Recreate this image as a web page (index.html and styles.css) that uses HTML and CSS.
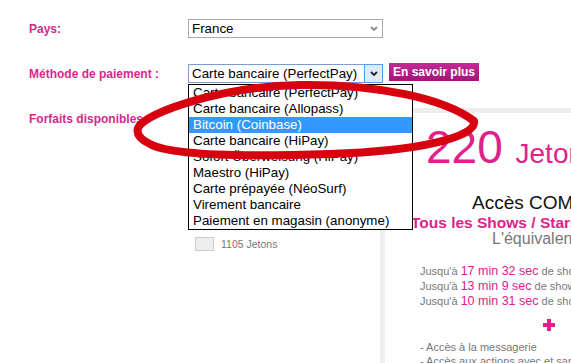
FILE: index.html
```html
<!DOCTYPE html>
<html lang="fr">
<head>
  <meta charset="UTF-8" />
  <title>Paiement</title>
  <link rel="stylesheet" href="styles.css">
</head>
<body>
  <div class="form">
    <div class="row">
      <label class="label">Pays:</label>
      <div class="select">
        <span class="select-text">France</span>
        <span class="arrow"><svg width="8" height="6" viewBox="0 0 8 6"><path d="M1 1 L4 4 L7 1" fill="none" stroke="#8a8a8a" stroke-width="1.8"/></svg></span>
      </div>
    </div>

    <div class="row row-method">
      <label class="label">Méthode de paiement :</label>
      <div class="select select-open">
        <span class="select-text">Carte bancaire (PerfectPay)</span>
        <span class="arrow"><svg width="8" height="6" viewBox="0 0 8 6"><path d="M1 1 L4 4 L7 1" fill="none" stroke="#222" stroke-width="1.8"/></svg></span>
        <ul class="dropdown">
          <li>Carte bancaire (PerfectPay)</li>
          <li>Carte bancaire (Allopass)</li>
          <li class="active">Bitcoin (Coinbase)</li>
          <li>Carte bancaire (HiPay)</li>
          <li>Sofort Überweisung (HiPay)</li>
          <li>Maestro (HiPay)</li>
          <li>Carte prépayée (NéoSurf)</li>
          <li>Virement bancaire</li>
          <li>Paiement en magasin (anonyme)</li>
        </ul>
      </div>
      <a class="btn-info" href="#">En savoir plus</a>
    </div>

    <div class="row row-packs">
      <label class="label">Forfaits disponibles :</label>
      <div class="packs">
        <div class="pack"><span class="pack-box"></span>1105 Jetons</div>
      </div>
      <div class="offer">
        <div class="offer-amount">220 <small>Jetons</small></div>
        <div class="offer-title">Accès COMPLET pendant 30 jours</div>
        <div class="offer-sub">Tous les Shows / Stars / Vidéos</div>
        <div class="offer-equiv">L'équivalent de</div>
        <div class="offer-times">
          <div>Jusqu'à <b>17 min 32 sec</b> de show privé</div>
          <div>Jusqu'à <b>13 min 9 sec</b> de show privé</div>
          <div>Jusqu'à <b>10 min 31 sec</b> de show privé</div>
        </div>
        <svg class="offer-plus" width="12" height="12" viewBox="0 0 12 12"><rect x="0" y="4" width="12" height="4" fill="#e0218a"/><rect x="4" y="0" width="4" height="12" fill="#e0218a"/></svg>
        <div class="offer-perks">
          <div>- Accès à la messagerie</div>
          <div>- Accès aux actions avec et sans webcam</div>
        </div>
      </div>
    </div>
  </div>

  <svg class="circle" width="571" height="363" viewBox="0 0 571 363">
    <path d="M138 128 C145 112 225 86 300 85 C380 84 445 99 474 121 C477 137 420 151 330 154 C240 157 170 155 150 144 C140 139 136 134 138 128 Z" fill="none" stroke="#d7000f" stroke-width="8" stroke-linejoin="round"/>
  </svg>
</body>
</html>
```

FILE: styles.css
```css
html, body {
  margin: 0;
  overflow: hidden;
}

body {
  width: 571px;
  height: 363px;
  font-family: "Liberation Sans", Arial, sans-serif;
  background: #fff;
  color: #000;
}

.form {
  padding: 19px 0 0 29px;
}

.row {
  display: flex;
  align-items: center;
}

.label {
  width: 159px;
  flex: none;
  color: #d9288c;
  font-size: 12px;
  font-weight: bold;
  line-height: 14px;
}

.row-method {
  margin-top: 26px;
}

.row-packs {
  margin-top: 25px;
  align-items: flex-start;
}

.row-packs .label {
  padding-top: 4px;
}

/* fake selects */
.select {
  position: relative;
  box-sizing: border-box;
  width: 195px;
  height: 19px;
  padding-left: 3px;
  border: 1px solid #a9a9a9;
  display: flex;
  align-items: center;
  font-size: 13.33px;
}

.select-text {
  flex: 1;
}

.arrow {
  width: 17px;
  align-self: stretch;
  display: flex;
  align-items: center;
  justify-content: center;
}

.select-open {
  border-color: #7a9cd3;
}

.select-open .arrow {
  background: #dcebfb;
  border: 1px solid #569de5;
  margin: -1px -1px -1px 0;
}

.dropdown {
  position: absolute;
  top: 19px;
  left: -1px;
  z-index: 2;
  width: 225px;
  box-sizing: border-box;
  margin: 0;
  padding: 0;
  list-style: none;
  background: #fff;
  border: 1px solid #000;
}

.dropdown li {
  height: 16px;
  line-height: 16px;
  padding-left: 4px;
}

.dropdown .active {
  background: #3399ff;
  color: #fff;
}

.btn-info {
  align-self: flex-start;
  margin: -1px 0 0 6px;
  width: 90px;
  height: 18px;
  line-height: 18px;
  text-align: center;
  background: linear-gradient(#c42a93, #a3137a);
  color: #fff;
  font-size: 12px;
  font-weight: bold;
  text-decoration: none;
}

/* packs list */
.packs {
  width: 192px;
  flex: none;
  padding-top: 129px;
}

.pack {
  display: flex;
  align-items: center;
  font-size: 10.5px;
  color: #777;
}

.pack-box {
  width: 19px;
  height: 14px;
  box-sizing: border-box;
  margin: 0 7px;
  border: 1px solid #ccc;
  background: #eee;
}

/* offer panel */
.offer {
  flex: 1;
  min-width: 0;
  height: 260px;
  border-top: 5px solid #eee;
  border-left: 5px solid #eee;
  overflow: hidden;
  white-space: nowrap;
}

.offer-amount {
  margin: 11px 0 0 41px;
  font-size: 46px;
  line-height: 46px;
  color: #e0218a;
}

.offer-amount small {
  font-size: 28px;
  line-height: 28px;
}

.offer-title {
  margin: 21px 0 0 87px;
  font-size: 19px;
  line-height: 24px;
  color: #111;
}

.offer-sub {
  margin-left: 26px;
  font-size: 15.5px;
  font-weight: bold;
  line-height: 16px;
  color: #e0218a;
}

.offer-equiv {
  margin-left: 107px;
  font-size: 16px;
  line-height: 16px;
  color: #777;
}

.offer-times {
  margin: 17px 0 0 35px;
  font-size: 11px;
  line-height: 15px;
  color: #777;
}

.offer-times b {
  font-weight: normal;
  font-size: 12.5px;
  line-height: 12px;
  color: #e0218a;
}

.offer-plus {
  display: block;
  margin: 10px 0 0 158px;
}

.offer-perks {
  margin: 9px 0 0 35px;
  font-size: 11px;
  line-height: 14px;
  color: #777;
}

.circle {
  position: absolute;
  top: 0;
  left: 0;
  z-index: 3;
  pointer-events: none;
}
```
